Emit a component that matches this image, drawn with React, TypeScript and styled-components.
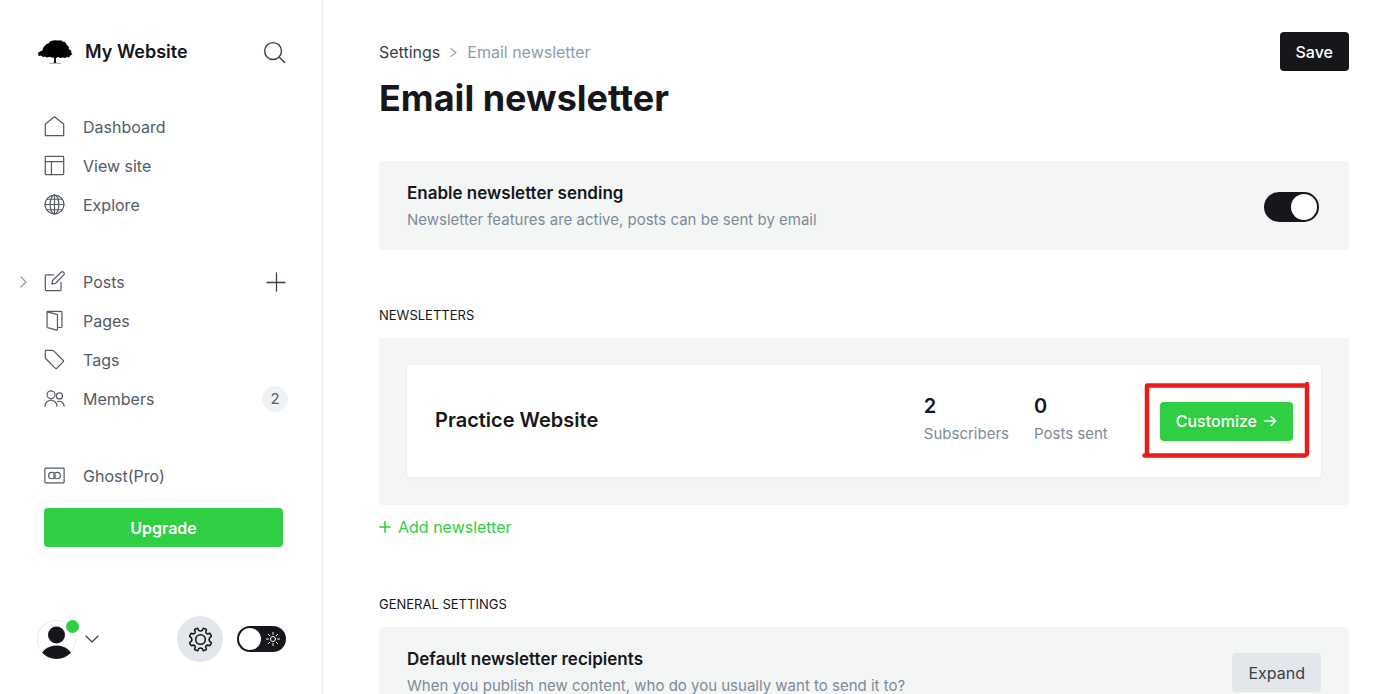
import React from "react";
import styled, { createGlobalStyle } from "styled-components";

const color = {
  ink: "#15171a",
  text: "#394047",
  nav: "#545b66",
  muted: "#7c8b9a",
  faint: "#8e9cac",
  green: "#30cf43",
  panel: "#f4f6f6",
  grey: "#e3e6ea",
};

const GlobalStyle = createGlobalStyle`
  * { box-sizing: border-box; }
  body {
    margin: 0;
    background: #fff;
    color: ${color.ink};
    font-family: Inter, "Liberation Sans", sans-serif;
    font-size: 16px;
    line-height: 24px;
  }
  button, input { font: inherit; }
  h1, h2, h3, p, ul { margin: 0; padding: 0; }
  svg { display: block; flex: none; }
`;

const Page = styled.div`
  display: flex;
  height: 100vh;
  overflow: hidden;
`;

const Sidebar = styled.aside`
  display: flex;
  flex-direction: column;
  flex: 0 0 323px;
  border-right: 1px solid #ebeef0;
  padding: 32px 36px 32px 20px;
`;

const SiteHeader = styled.header`
  display: flex;
  align-items: center;
  height: 40px;
  padding-left: 17px;
`;

const SiteName = styled.span`
  flex: 1;
  margin-left: 12px;
  font-size: 18px;
  font-weight: 600;
`;

const IconButton = styled.button`
  display: flex;
  align-items: center;
  justify-content: center;
  padding: 0;
  border: 0;
  background: none;
  color: ${color.text};
  cursor: pointer;
`;

const Nav = styled.nav`
  display: flex;
  flex-direction: column;
  gap: 38px;
  margin-top: 35px;
`;

const NavGroup = styled.ul`
  list-style: none;
`;

const NavItem = styled.li`
  display: flex;
  align-items: center;
  height: 39px;
  color: ${color.nav};
`;

const Expander = styled.span`
  display: flex;
  width: 24px;
  color: ${color.faint};
`;

const NavLink = styled.a`
  display: flex;
  flex: 1;
  align-items: center;
  gap: 18px;
  color: ${color.nav};
  text-decoration: none;
`;

const Count = styled.span`
  width: 26px;
  border-radius: 13px;
  margin-right: -2px;
  background: #eff2f4;
  font-size: 15px;
  line-height: 26px;
  text-align: center;
`;

const Button = styled.button<{ $tone: "dark" | "green" | "grey" }>`
  display: inline-flex;
  align-items: center;
  justify-content: center;
  gap: 6px;
  height: 39px;
  padding: 0 16px;
  border: 0;
  border-radius: 4px;
  background: ${(p) => ({ dark: color.ink, green: color.green, grey: color.grey })[p.$tone]};
  color: ${(p) => (p.$tone === "grey" ? color.text : "#fff")};
  font-weight: ${(p) => (p.$tone === "grey" ? 400 : 500)};
  white-space: nowrap;
  cursor: pointer;
`;

const UpgradeRow = styled.div`
  display: grid;
  margin: 13px 3px 0 24px;
  button { font-weight: 600; }
`;

const SidebarFooter = styled.footer`
  display: flex;
  align-items: center;
  height: 46px;
  margin-top: auto;
  padding-left: 17px;
`;

const UserMenu = styled(IconButton)`
  gap: 9px;
  margin-right: auto;
`;

const Avatar = styled.span`
  position: relative;
  width: 39px;
  height: 39px;
`;

const Status = styled.span`
  position: absolute;
  top: 0;
  right: -3px;
  width: 13px;
  height: 13px;
  border-radius: 50%;
  background: ${color.green};
`;

const SettingsButton = styled(IconButton)`
  width: 46px;
  height: 46px;
  border-radius: 50%;
  margin-right: 14px;
  background: ${color.grey};
  color: ${color.ink};
`;

const Switch = styled.label<{ $width: number; $height: number }>`
  position: relative;
  display: flex;
  flex: none;
  width: ${(p) => p.$width}px;
  height: ${(p) => p.$height}px;
  padding: 2px;
  border-radius: ${(p) => p.$height / 2}px;
  background: ${color.ink};
  cursor: pointer;

  input {
    appearance: none;
    width: ${(p) => p.$height - 4}px;
    height: ${(p) => p.$height - 4}px;
    border-radius: 50%;
    margin: 0;
    background: #fff;
    cursor: pointer;
  }
  input:checked { margin-left: auto; }
  svg { margin: auto; }
`;

const Main = styled.main`
  flex: 1;
  min-width: 0;
  overflow-y: auto;
  scrollbar-width: none;
  padding: 32px 51px 48px 56px;
`;

const PageHeader = styled.header`
  display: flex;
  align-items: flex-start;
  justify-content: space-between;
`;

const Breadcrumb = styled.nav`
  display: flex;
  align-items: center;
  gap: 9px;
  height: 40px;
  color: ${color.faint};

  a { color: ${color.text}; text-decoration: none; }
`;

const Title = styled.h1`
  font-size: 36px;
  font-weight: 700;
  line-height: 52px;
`;

const Panel = styled.section`
  display: flex;
  align-items: center;
  justify-content: space-between;
  padding: 20px 28px 18px;
  border-radius: 3px;
  background: ${color.panel};
`;

const EnablePanel = styled(Panel)`
  margin-top: 37px;
  padding-right: 30px;
`;

const SettingTitle = styled.h3`
  font-size: 17px;
  font-weight: 600;
  line-height: 25px;
`;

const Description = styled.p`
  margin-top: 2px;
  color: ${color.muted};
  font-size: 15px;
`;

const SectionTitle = styled.h2`
  margin: 53px 0 11px;
  font-size: 13px;
  font-weight: 400;
  text-transform: uppercase;
`;

const Card = styled.article`
  display: flex;
  flex: 1;
  align-items: center;
  height: 112px;
  margin: 7px 0 10px;
  padding: 0 28px;
  border-radius: 3px;
  background: #fff;
  box-shadow: 0 1px 4px rgba(0, 0, 0, 0.06);
`;

const CardTitle = styled.h3`
  flex: 1;
  padding-bottom: 2px;
  font-size: 20px;
  font-weight: 600;
`;

const Stats = styled.div`
  display: flex;
  gap: 25px;
  margin-right: 52px;
  padding-bottom: 2px;
`;

const StatValue = styled.p`
  font-size: 20px;
  font-weight: 600;
  line-height: 28px;
`;

const StatLabel = styled.p`
  color: ${color.muted};
  font-size: 15px;
  line-height: 28px;
`;

const Highlighted = styled.div`
  position: relative;
  display: flex;

  > svg {
    position: absolute;
    top: -22px;
    left: -18px;
    pointer-events: none;
  }
`;

const AddButton = styled(IconButton)`
  gap: 7px;
  margin-top: 10px;
  color: ${color.green};
`;

const Stroke = ({ size = 20, width = 1.4, box = 24, children }: { size?: number; width?: number; box?: number; children: React.ReactNode }) => (
  <svg width={size} height={size} viewBox={`0 0 ${box} ${box}`} fill="none" stroke="currentColor" strokeWidth={width} strokeLinecap="round" strokeLinejoin="round" aria-hidden="true">
    {children}
  </svg>
);

const TreeLogo = () => (
  <svg width="36" height="26" viewBox="0 0 36 26" aria-hidden="true">
    <path d="M1.500 15.500 1 13.800l2.500-1.600 2-1 1-3 3-3.200 2-.5L13 2.500l3-.9L18 1.200l3 .4 3-.3 2 1.400 2 .4 2 3 2 2-.3 2 2.300 1.500.4 2.400L35.500 15l-2 1.500-1.500 2L30 18l-2 1-2-.5-3 .6-2-1-2 .9-.2 2.500.5 2.500h-2.600l.5-2.500-.2-3-2 .200-2-1-3 .8-2-1-2 .4-2-1.500-2 .6-1.500-1.500Z" fill="#000" />
    <path d="M12 24.300h12" stroke="#888" strokeWidth=".8" />
  </svg>
);

const Person = () => (
  <svg width="39" height="39" viewBox="0 0 39 39" aria-hidden="true">
    <defs>
      <clipPath id="avatar-round"><circle cx="19.500" cy="19.500" r="19.500" /></clipPath>
    </defs>
    <circle cx="19.500" cy="19.500" r="19" fill="#fff" stroke="#e9ecee" />
    <g clipPath="url(#avatar-round)" fill={color.ink}>
      <circle cx="19.500" cy="15" r="8.500" />
      <ellipse cx="19.500" cy="37.500" rx="15.500" ry="12" />
    </g>
  </svg>
);

const Gear = () => (
  <Stroke size={25} width={1.500}>
    <circle cx="12" cy="12" r="4.600" />
    <path d="M10.200 3.200 9.600 1.700Q9.400 1 8.700 1.300L6.800 2.100Q6.100 2.400 6.400 3.100L7 4.800Q7 6.400 5.200 6.600L3.700 6.200Q3 6 2.600 6.600L1.700 8.500Q1.400 9.200 2 9.500L3.200 10.200Q4.200 12 3.200 13.800L2 14.500Q1.400 14.800 1.700 15.500L2.600 17.400Q3 18 3.700 17.800L5.200 17.400Q7 17.600 7 19.200L6.400 20.900Q6.100 21.600 6.800 21.900L8.700 22.700Q9.400 23 9.600 22.300L10.200 20.800Q12 19.600 13.800 20.800L14.400 22.300Q14.600 23 15.300 22.700L17.200 21.900Q17.900 21.600 17.600 20.900L17 19.200Q17 17.600 18.800 17.400L20.300 17.800Q21 18 21.400 17.400L22.300 15.500Q22.600 14.800 22 14.500L20.800 13.800Q19.800 12 20.800 10.200L22 9.500Q22.600 9.200 22.300 8.500L21.400 6.600Q21 6 20.300 6.200L18.800 6.600Q17 6.400 17 4.800L17.600 3.100Q17.900 2.400 17.200 2.100L15.300 1.300Q14.600 1 14.400 1.700L13.800 3.200Q12 4.400 10.200 3.200Z" />
  </Stroke>
);

const icons = {
  home: <path d="M1.500 9.200 12 .9l10.500 8.300v13.300h-21Z" />,
  layout: <><rect x="1.500" y="1.500" width="21" height="21" rx="1" /><path d="M1.500 7.500h21M8.500 7.500v15" /></>,
  globe: <><circle cx="12" cy="12" r="10.800" /><ellipse cx="12" cy="12" rx="5" ry="10.800" /><path d="M12 1.200v21.600M1.200 12h21.600M3 6h18M3 18h18" /></>,
  edit: <><path d="M11 4.500H2.500a1 1 0 0 0-1 1v16a1 1 0 0 0 1 1h16a1 1 0 0 0 1-1V13" /><path d="m9 15 1-4.500L19.500 1.500a2.100 2.100 0 0 1 3 3L13.400 14 9 15Z" /></>,
  pages: <path d="M4 2.200 14.600 5a1 1 0 0 1 .8 1v16.300a.7.7 0 0 1-.9.7L4.200 20.100a1 1 0 0 1-.7-1V2.500q0-1 1-1h15a1 1 0 0 1 1 1V19a1 1 0 0 1-1 1h-4" />,
  tag: <path d="M1.500 2.500a1 1 0 0 1 1-1h7.200a2 2 0 0 1 1.400.6l11 11a1 1 0 0 1 0 1.400l-7.600 7.600a1 1 0 0 1-1.400 0l-11-11a2 2 0 0 1-.6-1.400Z" />,
  members: <><circle cx="8" cy="7.800" r="4.500" /><circle cx="17.700" cy="9" r="3.500" /><path d="M1.200 20.800a6.800 6.800 0 0 1 13.600 0M15.500 15.500a5.600 5.600 0 0 1 7.500 5.300" /></>,
  pro: <><rect x="1" y="3.500" width="22" height="17" rx="1" /><circle cx="9" cy="12" r="3.700" /><circle cx="15" cy="12" r="3.700" /></>,
};

type Entry = { label: string; icon: keyof typeof icons; expandable?: boolean; count?: number };

const groups: Entry[][] = [
  [
    { label: "Dashboard", icon: "home" },
    { label: "View site", icon: "layout" },
    { label: "Explore", icon: "globe" },
  ],
  [
    { label: "Posts", icon: "edit", expandable: true },
    { label: "Pages", icon: "pages" },
    { label: "Tags", icon: "tag" },
    { label: "Members", icon: "members", count: 2 },
  ],
  [{ label: "Ghost(Pro)", icon: "pro" }],
];

const stats = [
  { value: 2, label: "Subscribers" },
  { value: 0, label: "Posts sent" },
];

export default function App() {
  return (
    <Page>
      <GlobalStyle />
      <Sidebar>
        <SiteHeader>
          <TreeLogo />
          <SiteName>My Website</SiteName>
          <IconButton aria-label="Search">
            <Stroke size={23} width={1.5}>
              <circle cx="10.500" cy="10.500" r="8.800" />
              <path d="m17 17 5.500 5.500" />
            </Stroke>
          </IconButton>
        </SiteHeader>
        <Nav>
          {groups.map((group) => (
            <NavGroup key={group[0].label}>
              {group.map((item) => (
                <NavItem key={item.label}>
                  <Expander>
                    {item.expandable && (
                      <Stroke size={12} width={1.2} box={12}><path d="m1 1 5 5-5 5" /></Stroke>
                    )}
                  </Expander>
                  <NavLink href="#">
                    <Stroke size={21}>{icons[item.icon]}</Stroke>
                    {item.label}
                  </NavLink>
                  {item.expandable && (
                    <IconButton aria-label="New post">
                      <Stroke size={20} width={1.3} box={20}><path d="M10.500 1v18M1 10.500h18" /></Stroke>
                    </IconButton>
                  )}
                  {item.count && <Count>{item.count}</Count>}
                </NavItem>
              ))}
            </NavGroup>
          ))}
        </Nav>
        <UpgradeRow>
          <Button $tone="green">Upgrade</Button>
        </UpgradeRow>
        <SidebarFooter>
          <UserMenu aria-label="Account">
            <Avatar><Person /><Status /></Avatar>
            <Stroke size={14} width={1.2} box={14}><path d="m1 4 6 6 6-6" /></Stroke>
          </UserMenu>
          <SettingsButton aria-label="Settings"><Gear /></SettingsButton>
          <Switch $width={49} $height={26}>
            <input type="checkbox" aria-label="Dark mode" />
            <svg width="14" height="14" viewBox="0 0 14 14" fill="none" stroke="#fff" strokeLinecap="round" aria-hidden="true">
              <circle cx="7" cy="7" r="2.500" />
              <path d="M7 .5v2M7 11.500v2M.5 7h2M11.500 7h2M2.400 2.400l1.400 1.400M10.200 10.200l1.400 1.400M2.400 11.600l1.400-1.400M10.200 3.800l1.400-1.400" />
            </svg>
          </Switch>
        </SidebarFooter>
      </Sidebar>
      <Main>
        <PageHeader>
          <div>
            <Breadcrumb aria-label="Breadcrumb">
              <a href="#">Settings</a>
              <Stroke size={9} width={1.2} box={9}><path d="m2 .6 5 3.900-5 3.900" /></Stroke>
              <span>Email newsletter</span>
            </Breadcrumb>
            <Title>Email newsletter</Title>
          </div>
          <Button $tone="dark">Save</Button>
        </PageHeader>

        <EnablePanel>
          <div>
            <SettingTitle>Enable newsletter sending</SettingTitle>
            <Description>Newsletter features are active, posts can be sent by email</Description>
          </div>
          <Switch $width={55} $height={30}>
            <input type="checkbox" defaultChecked aria-label="Enable newsletter sending" />
          </Switch>
        </EnablePanel>

        <SectionTitle>Newsletters</SectionTitle>
        <Panel>
          <Card>
            <CardTitle>Practice Website</CardTitle>
            <Stats>
              {stats.map((stat) => (
                <div key={stat.label}>
                  <StatValue>{stat.value}</StatValue>
                  <StatLabel>{stat.label}</StatLabel>
                </div>
              ))}
            </Stats>
            <Highlighted>
              <Button $tone="green">
                Customize
                <Stroke size={14} width={1.6} box={14}><path d="M1.500 7h11M8 2.500 12.500 7 8 11.500" /></Stroke>
              </Button>
              <svg width="170" height="80" viewBox="0 0 170 80" fill="none" stroke="#e91c1c" strokeWidth="4.500" strokeLinecap="round" strokeLinejoin="round" aria-hidden="true">
                <path d="M5 75.500V5.500h160V4v70l-2 1.500H2.500" />
              </svg>
            </Highlighted>
          </Card>
        </Panel>
        <AddButton>
          <Stroke size={12} width={1.6} box={12}><path d="M6 .8v10.400M.8 6h10.400" /></Stroke>
          Add newsletter
        </AddButton>

        <SectionTitle>General settings</SectionTitle>
        <Panel>
          <div>
            <SettingTitle>Default newsletter recipients</SettingTitle>
            <Description>When you publish new content, who do you usually want to send it to?</Description>
          </div>
          <Button $tone="grey">Expand</Button>
        </Panel>
      </Main>
    </Page>
  );
}
